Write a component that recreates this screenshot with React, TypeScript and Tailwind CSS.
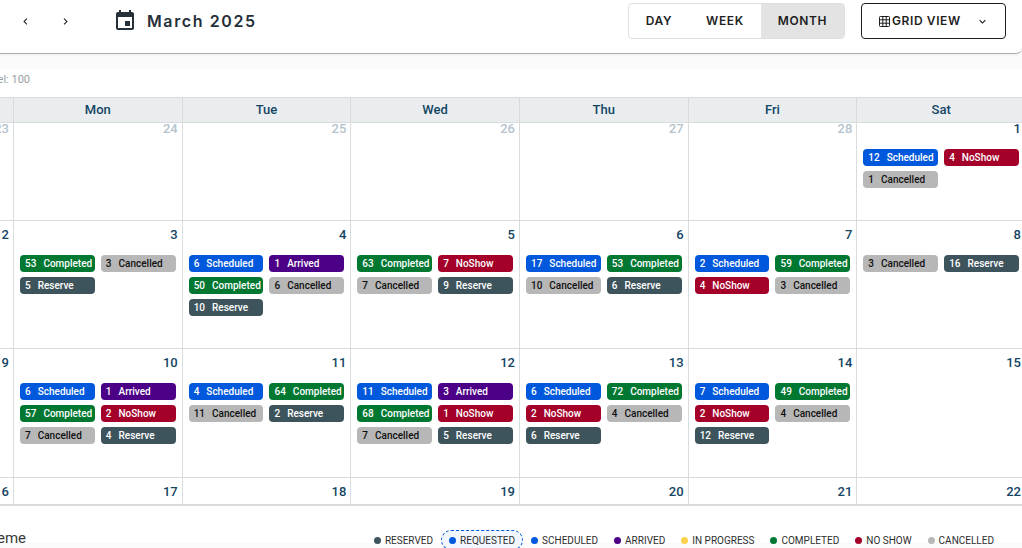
import React, { useState } from 'react';
import { MdEvent, MdChevronLeft, MdChevronRight, MdExpandMore } from 'react-icons/md';

type Status = 'Scheduled' | 'NoShow' | 'Cancelled' | 'Completed' | 'Reserve' | 'Arrived';
type Entry = [number, Status];
type Day = { date: number; muted?: boolean; entries?: Entry[] };

const pillStyles: Record<Status, string> = {
  Scheduled: 'bg-[#0058dd] text-white',
  NoShow: 'bg-[#a50029] text-white',
  Cancelled: 'bg-[#b7b7b7] text-[#111111]',
  Completed: 'bg-[#007832] text-white',
  Reserve: 'bg-[#3e545c] text-white',
  Arrived: 'bg-[#4c0087] text-white',
};

const weekdays = ['', 'Mon', 'Tue', 'Wed', 'Thu', 'Fri', 'Sat'];

const weeks: { height: string; numberLine: string; days: Day[] }[] = [
  {
    height: 'h-[98px]',
    numberLine: 'leading-3',
    days: [
      { date: 23, muted: true },
      { date: 24, muted: true },
      { date: 25, muted: true },
      { date: 26, muted: true },
      { date: 27, muted: true },
      { date: 28, muted: true },
      { date: 1, entries: [[12, 'Scheduled'], [4, 'NoShow'], [1, 'Cancelled']] },
    ],
  },
  {
    height: 'h-32',
    numberLine: 'pt-[5px] leading-[18px]',
    days: [
      { date: 2 },
      { date: 3, entries: [[53, 'Completed'], [3, 'Cancelled'], [5, 'Reserve']] },
      { date: 4, entries: [[6, 'Scheduled'], [1, 'Arrived'], [50, 'Completed'], [6, 'Cancelled'], [10, 'Reserve']] },
      { date: 5, entries: [[63, 'Completed'], [7, 'NoShow'], [7, 'Cancelled'], [9, 'Reserve']] },
      { date: 6, entries: [[17, 'Scheduled'], [53, 'Completed'], [10, 'Cancelled'], [6, 'Reserve']] },
      { date: 7, entries: [[2, 'Scheduled'], [59, 'Completed'], [4, 'NoShow'], [3, 'Cancelled']] },
      { date: 8, entries: [[3, 'Cancelled'], [16, 'Reserve']] },
    ],
  },
  {
    height: 'h-[129px]',
    numberLine: 'pt-[5px] leading-[18px]',
    days: [
      { date: 9 },
      { date: 10, entries: [[6, 'Scheduled'], [1, 'Arrived'], [57, 'Completed'], [2, 'NoShow'], [7, 'Cancelled'], [4, 'Reserve']] },
      { date: 11, entries: [[4, 'Scheduled'], [64, 'Completed'], [11, 'Cancelled'], [2, 'Reserve']] },
      { date: 12, entries: [[11, 'Scheduled'], [3, 'Arrived'], [68, 'Completed'], [1, 'NoShow'], [7, 'Cancelled'], [5, 'Reserve']] },
      { date: 13, entries: [[6, 'Scheduled'], [72, 'Completed'], [2, 'NoShow'], [4, 'Cancelled'], [6, 'Reserve']] },
      { date: 14, entries: [[7, 'Scheduled'], [49, 'Completed'], [2, 'NoShow'], [4, 'Cancelled'], [12, 'Reserve']] },
      { date: 15 },
    ],
  },
  {
    height: 'h-[27px]',
    numberLine: 'pt-[5px] leading-[18px]',
    days: [{ date: 16 }, { date: 17 }, { date: 18 }, { date: 19 }, { date: 20 }, { date: 21 }, { date: 22 }],
  },
];

const legend = [
  { label: 'RESERVED', dot: 'bg-[#3e545c]', frame: 'border-transparent' },
  { label: 'REQUESTED', dot: 'bg-[#0058dd]', frame: 'border-[#0058dd] bg-[#f2f7ff]' },
  { label: 'SCHEDULED', dot: 'bg-[#0058dd]', frame: 'border-transparent' },
  { label: 'ARRIVED', dot: 'bg-[#4c0087]', frame: 'border-transparent' },
  { label: 'IN PROGRESS', dot: 'bg-[#ffd24d]', frame: 'border-transparent' },
  { label: 'COMPLETED', dot: 'bg-[#007832]', frame: 'border-transparent' },
  { label: 'NO SHOW', dot: 'bg-[#a50029]', frame: 'border-transparent' },
  { label: 'CANCELLED', dot: 'bg-[#b7b7b7]', frame: 'border-transparent' },
];

function GridIcon({ className }: { className: string }) {
  return (
    <svg viewBox="0 0 11 11" fill="none" stroke="currentColor" className={className} aria-hidden="true">
      <rect x="0.5" y="0.5" width="10" height="10" rx="0.8" />
      <path d="M3.8 0.5v10M7.2 0.5v10M0.5 3.8h10M0.5 7.2h10" />
    </svg>
  );
}

function Toolbar() {
  const [view, setView] = useState('MONTH');
  return (
    <header className="flex h-[54px] items-start rounded-br-md border-b border-[#a9adaf] bg-white pt-[3px] pr-4 pl-[5px] font-['Inter',sans-serif] shadow-xs">
      <div className="flex h-9 items-center">
        <button aria-label="Previous month" className="flex h-9 w-10 items-center justify-center text-[#212121]">
          <MdChevronLeft className="size-[13px]" />
        </button>
        <button aria-label="Next month" className="flex h-9 w-10 items-center justify-center text-[#212121]">
          <MdChevronRight className="size-[13px]" />
        </button>
        <MdEvent className="ml-7 size-6 text-[#263039]" />
        <h1 className="ml-[10px] text-base font-semibold tracking-widest text-[#263039]">March 2025</h1>
      </div>
      <div className="ml-auto flex h-9 overflow-hidden rounded border border-[#e0e0e0] text-xs font-semibold tracking-wider text-[#1e1e1e]">
        {['DAY', 'WEEK', 'MONTH'].map((name) => (
          <button
            key={name}
            aria-pressed={view === name}
            onClick={() => setView(name)}
            className="px-[17px] aria-pressed:bg-[#e3e3e3]"
          >
            {name}
          </button>
        ))}
      </div>
      <label className="ml-4 grid h-9 w-[145px] items-center rounded border border-[#1e1e1e] text-xs font-semibold tracking-wider text-[#1e1e1e]">
        <GridIcon className="col-start-1 row-start-1 ml-[17px] size-[11px]" />
        <select aria-label="View layout" className="col-start-1 row-start-1 h-full w-full appearance-none bg-transparent pl-[30px]">
          <option>GRID VIEW</option>
        </select>
        <MdExpandMore className="pointer-events-none col-start-1 row-start-1 mr-4 size-[13px] justify-self-end" />
      </label>
    </header>
  );
}

function Pill({ entry: [count, status] }: { entry: Entry }) {
  return (
    <li className={`flex h-[17px] items-center gap-[7px] rounded pl-[5px] text-[10px] font-medium whitespace-nowrap ${pillStyles[status]}`}>
      <span>{count}</span>
      <span>{status}</span>
    </li>
  );
}

function Calendar() {
  return (
    <table className="w-[calc(100%+4px)] table-fixed border-separate border-spacing-0 border-t border-b border-[#d9dcdd] text-[#134563]">
      <thead>
        <tr className="h-[25px] bg-[#e9edf0]">
          {weekdays.map((name, i) => (
            <th
              key={i}
              className={`border-r border-b border-[#d9dcdd] p-0 text-[13px] leading-4 font-medium ${i === 0 ? 'w-[14px]' : ''}`}
            >
              {name}
            </th>
          ))}
        </tr>
      </thead>
      <tbody>
        {weeks.map((week, w) => (
          <tr key={w} className={week.height}>
            {week.days.map((day) => (
              <td key={day.date} className="border-r border-b border-[#d9dcdd] p-0 align-top">
                <div className={`flex justify-end pr-1 text-[13px] font-medium ${week.numberLine} ${day.muted ? 'text-[#b5c3cd]' : ''}`}>
                  {day.date}
                </div>
                {day.entries && (
                  <ul className={`grid grid-cols-2 gap-x-1.5 gap-y-[5px] px-1.5 ${w === 0 ? 'pt-[14px]' : 'pt-[11px]'}`}>
                    {day.entries.map((entry) => (
                      <Pill key={entry[1]} entry={entry} />
                    ))}
                  </ul>
                )}
              </td>
            ))}
          </tr>
        ))}
      </tbody>
    </table>
  );
}

function Legend() {
  return (
    <footer className="flex h-[37px] items-end justify-between bg-white pr-5">
      <div className="-mb-1 flex w-[26px] justify-end text-[15px] leading-[18px] whitespace-nowrap text-[#3a3a3a]">eme</div>
      <ul className="-mb-[7px] flex items-center">
        {legend.map((item) => (
          <li
            key={item.label}
            className={`flex h-5 items-center gap-1 rounded-full border border-dashed px-[7px] text-[10px] text-[#2e2e2e] ${item.frame}`}
          >
            <span className={`size-[7px] rounded-full ${item.dot}`} />
            {item.label}
          </li>
        ))}
      </ul>
    </footer>
  );
}

export default function App() {
  return (
    <div className="h-screen overflow-hidden bg-[#fbfbfb] font-['Roboto',sans-serif]">
      <Toolbar />
      <main className="mt-[15px] bg-white">
        <div className="h-7 pt-[3px]">
          <p className="flex w-[30px] justify-end text-[11px] leading-4 whitespace-nowrap text-[#9a9fa3]">el: 100</p>
        </div>
        <Calendar />
        <Legend />
      </main>
    </div>
  );
}
